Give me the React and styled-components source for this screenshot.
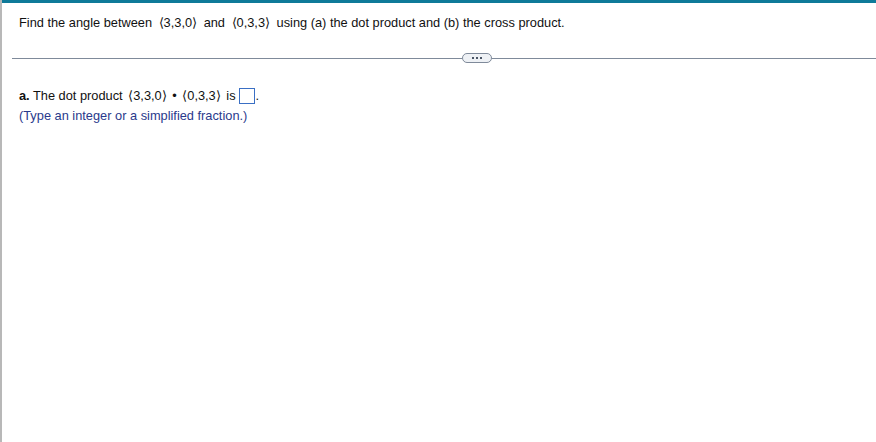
import React from "react";
import styled, { createGlobalStyle } from "styled-components";

const Global = createGlobalStyle`
  html, body { margin: 0; padding: 0; background: #fff; }
  body { font-family: "Liberation Sans", Arial, sans-serif; }
`;

const Page = styled.div`
  width: 876px;
  height: 442px;
  display: flex;
  box-sizing: border-box;
  overflow: hidden;
`;

const LeftRule = styled.div`
  width: 2px;
  flex: 0 0 2px;
  background: #b8b8b8;
`;

const Main = styled.div`
  flex: 1;
  display: flex;
  flex-direction: column;
`;

const TopBar = styled.div`
  height: 3px;
  background: #0f7a99;
`;

const Question = styled.div`
  padding: 12px 0 0 17px;
  height: 28px;
  font-size: 12.8px;
  color: #111;
  white-space: pre;
`;

const Vec = styled.span`
  margin: 0 ${(p) => p.$gap ?? 3}px;
`;

const DividerRow = styled.div`
  margin-left: 10px;
  margin-top: 9px;
  display: flex;
  align-items: center;
  height: 12px;
`;

const Line = styled.div`
  flex: ${(p) => (p.$fixed ? `0 0 ${p.$fixed}px` : "1")};
  height: 1px;
  background: #7f8a9a;
`;

const Pill = styled.button`
  width: 30px;
  height: 10px;
  border: 1px solid #7f8a9a;
  border-radius: 6px;
  background: #eef1f5;
  padding: 0;
  display: flex;
  align-items: center;
  justify-content: center;
  gap: 2px;
`;

const Dot = styled.span`
  width: 2px;
  height: 2px;
  background: #4a5566;
`;

const Answer = styled.div`
  padding: 22px 0 0 17px;
  font-size: 12.8px;
  line-height: 20px;
  color: #111;
`;

const Line1 = styled.div`
  display: flex;
  align-items: center;
  white-space: pre;
`;

const Bold = styled.b`
  font-weight: bold;
`;

const Box = styled.span`
  display: inline-block;
  width: 14px;
  height: 14px;
  border: 1px solid #3a6fc4;
  margin-left: 3px;
  margin-right: 1px;
`;

const Hint = styled.div`
  color: #2a3a8c;
`;

export default function App() {
  return (
    <Page>
      <Global />
      <LeftRule />
      <Main>
        <TopBar />
        <Question>
          Find the angle between<Vec> ⟨3,3,0⟩ </Vec>and<Vec> ⟨0,3,3⟩ </Vec>using (a) the dot product and (b) the cross product.
        </Question>
        <DividerRow>
          <Line $fixed={450} />
          <Pill aria-label="more">
            <Dot />
            <Dot />
            <Dot />
          </Pill>
          <Line />
        </DividerRow>
        <Answer>
          <Line1>
            <Bold>a.</Bold> The dot product<Vec $gap={2}> ⟨3,3,0⟩ </Vec>•<Vec $gap={2}> ⟨0,3,3⟩ </Vec>is<Box />.
          </Line1>
          <Hint>(Type an integer or a simplified fraction.)</Hint>
        </Answer>
      </Main>
    </Page>
  );
}
